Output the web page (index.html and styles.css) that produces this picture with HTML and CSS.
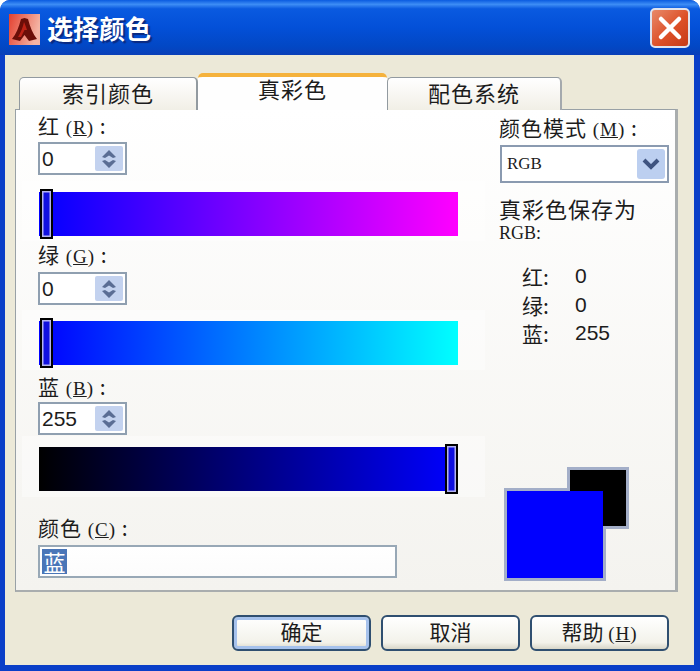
FILE: index.html
```html
<!DOCTYPE html>
<html lang="zh-CN">
<head>
    <meta charset="UTF-8">
    <title>选择颜色</title>
    <link rel="stylesheet" href="styles.css">
</head>
<body>
    <div class="window">
        <div class="titlebar">
            <svg class="app-icon" width="31" height="31" viewBox="0 0 31 31">
                <defs>
                    <linearGradient id="iconBg" x1="0" y1="0" x2="1" y2="0.3">
                        <stop offset="0" stop-color="#e4402f"/>
                        <stop offset="1" stop-color="#f4b4a4"/>
                    </linearGradient>
                </defs>
                <rect width="31" height="31" fill="url(#iconBg)"/>
                <path d="M15.500 4 L19 5 C21 13 24 20 28 25 L20 27 L15.500 21 L11 27 L3 25 C7 20 10 13 12 5 Z" fill="#6b0e08"/>
                <path d="M15 8 C14 13 12 18 9 23 L12 23 L15.500 16 L18 16 C17 13 16 10 15 8 Z" fill="#bd2216"/>
            </svg>
            <span class="title">选择颜色</span>
            <div class="close">
                <svg width="26" height="26" viewBox="0 0 26 26">
                    <path d="M4 4 L22 22 M22 4 L4 22" stroke="#fff" stroke-width="4.5" stroke-linecap="round"/>
                </svg>
            </div>
        </div>

        <div class="content">
            <div class="tabs">
                <div class="tab tab-first">索引颜色</div>
                <div class="tab active">真彩色</div>
                <div class="tab tab-last">配色系统</div>
            </div>

            <div class="panel">
                <div class="left">
                    <div class="label lbl-red">红 <span class="key"><u>R</u></span> :</div>
                    <div class="spin spin-red">
                        <span class="spin-value">0</span>
                        <div class="spin-btn">
                            <svg width="18" height="24" viewBox="0 0 18 24"><path d="M9 3 L16 10 L13 11 L9 8.500 L5 11 L2 10 Z M2 14 L5 13 L9 15.500 L13 13 L16 14 L9 21 Z" fill="#5a6d94"/></svg>
                        </div>
                    </div>
                    <div class="band band-red">
                        <div class="bar bar-red"><div class="thumb thumb-start"></div></div>
                    </div>

                    <div class="label lbl-green">绿 <span class="key"><u>G</u></span> :</div>
                    <div class="spin spin-green">
                        <span class="spin-value">0</span>
                        <div class="spin-btn">
                            <svg width="18" height="24" viewBox="0 0 18 24"><path d="M9 3 L16 10 L13 11 L9 8.500 L5 11 L2 10 Z M2 14 L5 13 L9 15.500 L13 13 L16 14 L9 21 Z" fill="#5a6d94"/></svg>
                        </div>
                    </div>
                    <div class="band">
                        <div class="bar bar-green"><div class="thumb thumb-start"></div></div>
                    </div>

                    <div class="label lbl-blue">蓝 <span class="key"><u>B</u></span> :</div>
                    <div class="spin spin-blue">
                        <span class="spin-value">255</span>
                        <div class="spin-btn">
                            <svg width="18" height="24" viewBox="0 0 18 24"><path d="M9 3 L16 10 L13 11 L9 8.500 L5 11 L2 10 Z M2 14 L5 13 L9 15.500 L13 13 L16 14 L9 21 Z" fill="#5a6d94"/></svg>
                        </div>
                    </div>
                    <div class="band band-blue">
                        <div class="bar bar-blue"><div class="thumb thumb-end"></div></div>
                    </div>

                    <div class="label lbl-color">颜色 <span class="key"><u>C</u></span> :</div>
                    <div class="color-input"><span class="selected">蓝</span></div>
                </div>

                <div class="right">
                    <div class="label lbl-mode">颜色模式 <span class="key"><u>M</u></span> :</div>
                    <div class="select">
                        <span class="select-value">RGB</span>
                        <div class="select-btn">
                            <svg width="20" height="14" viewBox="0 0 20 14"><path d="M3 3 L10 10 L17 3" fill="none" stroke="#3f5480" stroke-width="4"/></svg>
                        </div>
                    </div>
                    <div class="saved">真彩色保存为</div>
                    <div class="saved-rgb">RGB:</div>
                    <div class="values">
                        <span>红:</span><span class="num">0</span>
                        <span>绿:</span><span class="num">0</span>
                        <span>蓝:</span><span class="num">255</span>
                    </div>
                    <div class="swatches">
                        <div class="swatch swatch-frame"></div>
                        <div class="swatch swatch-old"></div>
                        <div class="swatch-new"></div>
                    </div>
                </div>
            </div>

            <div class="footer">
                <button class="btn btn-default">确定</button>
                <button class="btn">取消</button>
                <button class="btn">帮助 <span class="key"><u>H</u></span></button>
            </div>
        </div>
    </div>
</body>
</html>
```

FILE: styles.css
```css
html, body {
    margin: 0;
    padding: 0;
    background: #fff;
}

.window {
    width: 700px;
    height: 671px;
    display: flex;
    flex-direction: column;
    background: #0a3fc8;
    border-radius: 10px 10px 0 0;
    overflow: hidden;
    font-family: "Noto Sans CJK SC", sans-serif;
    color: #1c1c1c;
}

.titlebar {
    height: 55px;
    flex-shrink: 0;
    display: flex;
    align-items: center;
    padding: 0 10px 0 9px;
    box-sizing: border-box;
    background: linear-gradient(to bottom, #0a5be0 0%, #3d8df5 8%, #0a5ae0 16%, #0350d8 50%, #0247c4 85%, #0a3fb8 100%);
}

.app-icon {
    margin-top: 3px;
}

.title {
    margin-left: 7px;
    font-size: 26px;
    font-weight: 700;
    color: #fff;
    text-shadow: 2px 2px 1px #0a2a80;
}

.close {
    margin-left: auto;
    width: 40px;
    height: 40px;
    display: flex;
    align-items: center;
    justify-content: center;
    box-sizing: border-box;
    border: 2px solid #dfe3ee;
    border-radius: 5px;
    background: linear-gradient(135deg, #e88a6a, #dd5028 55%, #c63c18);
}

.content {
    flex: 1;
    margin: 0 6px 6px 5px;
    background: #ece9d8;
    display: flex;
    flex-direction: column;
}

.tabs {
    display: flex;
    align-items: flex-end;
    height: 37px;
    margin: 18px 0 -1px 14px;
    position: relative;
    z-index: 1;
}

.tab {
    height: 33px;
    box-sizing: border-box;
    border: 1px solid #929aa0;
    border-bottom: none;
    border-radius: 5px 5px 0 0;
    background: linear-gradient(to bottom, #fff, #f1efe6);
    text-align: center;
    font-size: 22px;
    line-height: 28px;
    letter-spacing: 1px;
}

.tab-first {
    width: 179px;
    border-right: 2px solid #929aa0;
}

.tab-last {
    width: 175px;
    border-right: 2px solid #a4a9ad;
}

.active {
    width: 189px;
    height: 37px;
    border: none;
    border-top: 4px solid #f5b23c;
    border-radius: 5px 5px 0 0;
    background: #fefefe;
    line-height: 23px;
}

.panel {
    display: flex;
    margin-left: 10px;
    width: 663px;
    height: 483px;
    box-sizing: border-box;
    border: 1px solid #99a1a6;
    border-right: 3px solid #a9adae;
    border-bottom: 2px solid #a9adae;
    background: linear-gradient(to bottom, #fff, #f4f3ef);
}

.left {
    width: 469px;
    padding-left: 6px;
    box-sizing: border-box;
}

.right {
    flex: 1;
    display: flex;
    flex-direction: column;
    padding-left: 14px;
}

.label {
    height: 24px;
    font-size: 21px;
    line-height: 22px;
    letter-spacing: 1px;
    white-space: nowrap;
}

.key {
    font-family: "Liberation Serif", serif;
    font-size: 19px;
    line-height: 1;
    letter-spacing: 1px;
}

.key::before {
    content: "(";
}

.key::after {
    content: ")";
}

.left .label {
    margin-left: 16px;
}

.lbl-red {
    margin-top: 4px;
}

.lbl-green {
    margin-top: 2px;
}

.lbl-blue {
    margin-top: 5px;
}

.lbl-color {
    margin-top: 19px;
}

.lbl-mode {
    margin-top: 6px;
}

.spin {
    width: 89px;
    height: 33px;
    margin-left: 16px;
    box-sizing: border-box;
    display: flex;
    align-items: center;
    justify-content: space-between;
    border: 2px solid #8f9fb0;
    background: #fff;
    padding: 2px;
}

.spin-red {
    margin-top: 4px;
}

.spin-green {
    margin-top: 5px;
}

.spin-blue {
    margin-top: 3px;
}

.spin-value {
    font-family: "Liberation Sans", sans-serif;
    font-size: 21px;
}

.spin-btn {
    width: 28px;
    height: 100%;
    display: flex;
    align-items: center;
    justify-content: center;
    border-radius: 2px;
    background: #c3d2ef;
}

.band {
    width: 463px;
    margin-top: 5px;
    padding: 11px 0 5px 17px;
    box-sizing: border-box;
    background: rgba(255, 255, 255, 0.4);
}

.band-red {
    margin-top: 6px;
}

.band-blue {
    margin-top: 1px;
    padding-bottom: 6px;
}

.bar {
    position: relative;
    width: 419px;
    height: 44px;
}

.bar-red {
    background: linear-gradient(to right, #0000ff, #ff00ff);
}

.bar-green {
    background: linear-gradient(to right, #0000ff, #00ffff);
}

.bar-blue {
    background: linear-gradient(to right, #000000, #0000ff);
}

.thumb {
    position: absolute;
    top: -3px;
    width: 13px;
    height: 50px;
    box-sizing: border-box;
    border: 2px solid #000;
    background: #1010e0;
    box-shadow: inset 0 0 0 1.500px #b4b4f0;
}

.thumb-start {
    left: 1px;
}

.thumb-end {
    right: 0;
}

.color-input {
    width: 359px;
    height: 33px;
    margin: 5px 0 0 16px;
    box-sizing: border-box;
    border: 2px solid #98a8b6;
    background: linear-gradient(to bottom, #fff, #fcfcfc);
    padding: 2px 0 0 2px;
}

.selected {
    display: block;
    width: 25px;
    height: 25px;
    font-size: 22px;
    line-height: 24px;
    text-align: center;
    color: #fff;
    background: #4a76b8;
}

.select {
    width: 169px;
    height: 38px;
    margin: 5px 0 0 1px;
    box-sizing: border-box;
    display: flex;
    align-items: center;
    justify-content: space-between;
    border: 2px solid #8a9ab0;
    background: #fff;
    padding: 2px;
}

.select-value {
    margin-left: 3px;
    font-family: "Liberation Serif", serif;
    font-size: 17px;
}

.select-btn {
    width: 28px;
    height: 100%;
    display: flex;
    align-items: center;
    justify-content: center;
    border-radius: 3px;
    background: #bccff0;
}

.saved {
    height: 25px;
    margin-top: 13px;
    font-size: 22px;
    line-height: 25px;
    letter-spacing: 1px;
}

.saved-rgb {
    height: 22px;
    margin-top: 1px;
    font-family: "Liberation Serif", serif;
    font-size: 18px;
    line-height: 22px;
}

.values {
    margin: 18px 0 0 23px;
    display: grid;
    grid-template-columns: 53px auto;
    grid-auto-rows: 28.5px;
    align-items: center;
    font-size: 21px;
    line-height: 24px;
}

.num {
    font-family: "Liberation Sans", sans-serif;
}

.swatches {
    position: relative;
    width: 125px;
    height: 114px;
    margin: auto 0 9px 5px;
}

.swatch {
    position: absolute;
    box-sizing: border-box;
    border: 3px solid #a3aec8;
}

.swatch-old {
    top: 0;
    right: 0;
    width: 62px;
    height: 62px;
    background: #000;
}

.swatch-frame {
    left: 0;
    bottom: 0;
    width: 102px;
    height: 93px;
}

.swatch-new {
    position: absolute;
    left: 3px;
    bottom: 3px;
    width: 96px;
    height: 87px;
    background: #0000ff;
}

.footer {
    display: flex;
    justify-content: flex-end;
    gap: 10px;
    margin-top: 23px;
    padding-right: 25px;
}

.btn {
    width: 139px;
    height: 36px;
    padding: 0 0 5px;
    border: 2px solid #2f4f70;
    border-radius: 6px;
    background: linear-gradient(to bottom, #fff, #f3f2ea 80%, #d8d6c8);
    font-family: "Noto Sans CJK SC", sans-serif;
    font-size: 21px;
    line-height: 26px;
    color: #1c1c1c;
}

.btn-default {
    box-shadow: inset 0 0 0 3px #a6c2ec;
}
```
